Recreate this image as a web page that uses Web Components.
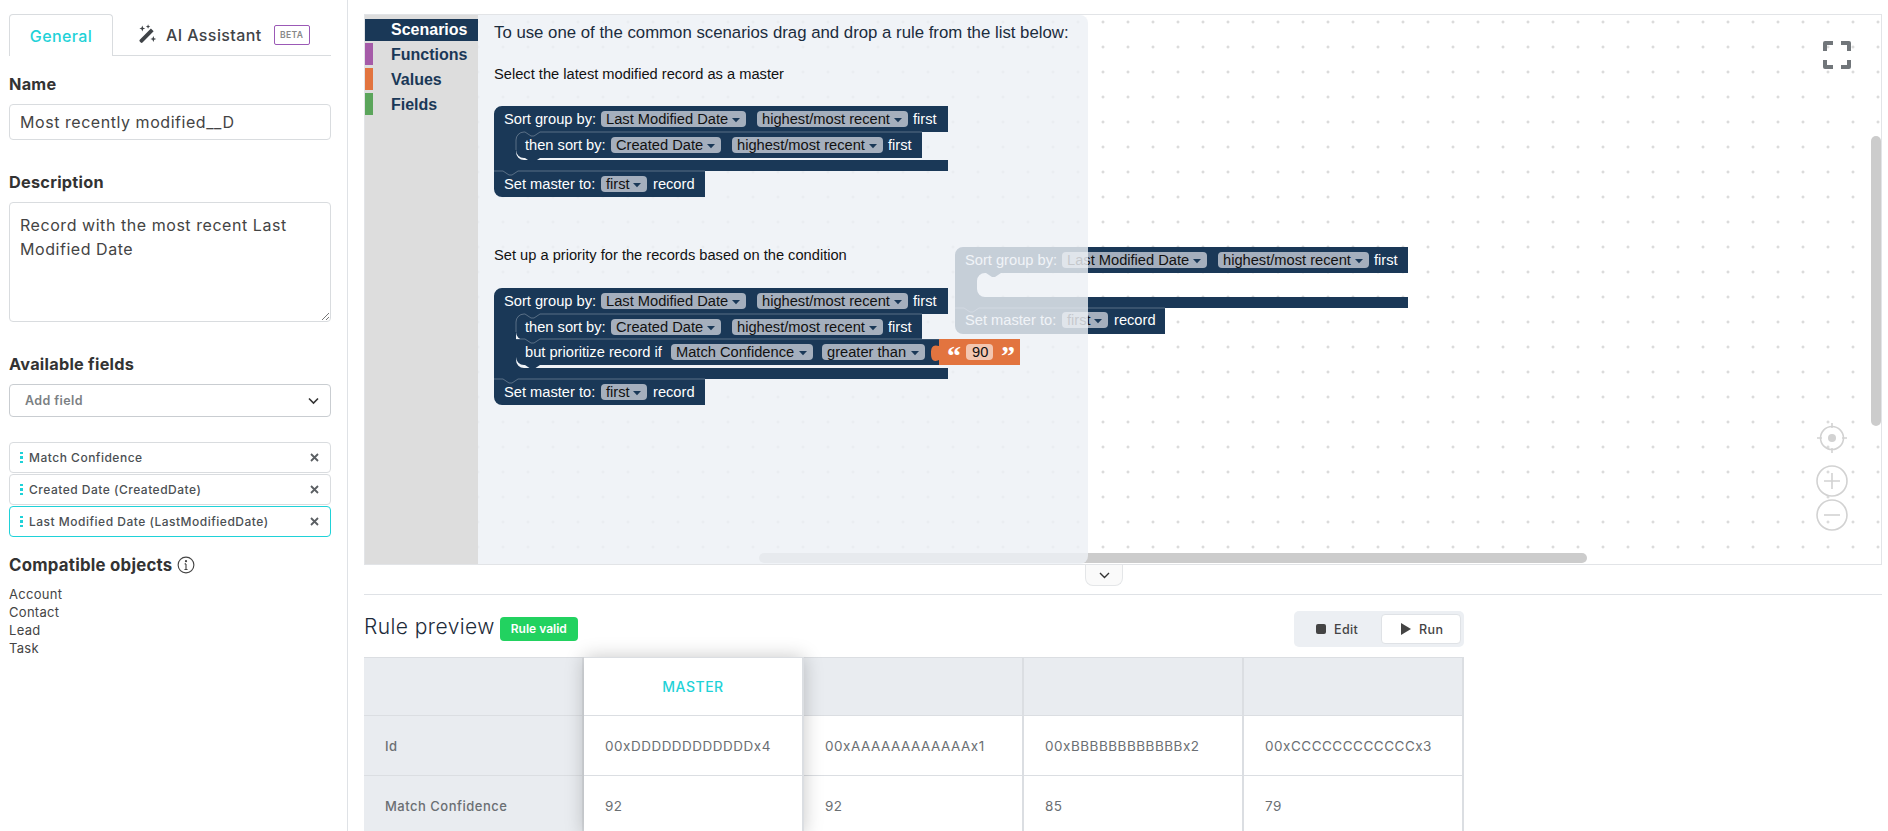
<!DOCTYPE html>
<html>
<head>
<meta charset="utf-8">
<style>
  html, body { margin: 0; height: 831px; overflow: hidden; background: #fff; }
  body { font-family: Inter, "Open Sans", sans-serif; color: #333; }
</style>
</head>
<body>
<rule-app>
  <rule-sidebar slot="side">
    <side-tabs></side-tabs>
    <side-label style="margin-top:19px">Name</side-label>
    <text-box style="margin-top:11px;height:36px">Most recently modified__D</text-box>
    <side-label style="margin-top:33px">Description</side-label>
    <text-box multi style="margin-top:11px;height:120px">Record with the most recent Last<br>Modified Date</text-box>
    <side-label style="margin-top:33px">Available fields</side-label>
    <add-select style="margin-top:11px"></add-select>
    <field-chip style="margin-top:25px">Match Confidence</field-chip>
    <field-chip style="margin-top:1px">Created Date (CreatedDate)</field-chip>
    <field-chip active style="margin-top:1px">Last Modified Date (LastModifiedDate)</field-chip>
    <side-label info style="margin-top:19px">Compatible objects</side-label>
    <object-list style="margin-top:11px">
      <div>Account</div><div>Contact</div><div>Lead</div><div>Task</div>
    </object-list>
  </rule-sidebar>
  <rule-canvas slot="main"></rule-canvas>
  <collapse-handle slot="main"></collapse-handle>
  <rule-preview slot="main"></rule-preview>
</rule-app>

<script>
  // small helper, every element is only markup + styles
  function simple(name, html) {
    customElements.define(name, class extends HTMLElement {
      constructor() {
        super();
        this.attachShadow({ mode: 'open' }).innerHTML = html;
      }
    });
  }

  simple('rule-app', `
    <style>
      :host { display: grid; grid-template-columns: 348px 1fr; height: 831px; overflow: hidden; }
      .side { border-right: 1px solid #dfe2e6; padding: 14px 16px 0 9px; }
      .main { position: relative; padding: 14px 6px 0 16px; min-width: 0; }
    </style>
    <div class="side"><slot name="side"></slot></div>
    <div class="main"><slot name="main"></slot></div>
  `);

  simple('rule-sidebar', `
    <style>:host { display: flex; flex-direction: column; }</style>
    <slot></slot>
  `);

  simple('side-tabs', `
    <style>
      :host { display: flex; height: 42px; border-bottom: 1px solid #d9dcdf; font-size: 16px; letter-spacing: .4px; font-weight: 500; box-sizing: border-box; }
      .on { width: 104px; box-sizing: border-box; margin-bottom: -1px; height: 42px; background: #fff; border: 1px solid #d9dcdf; border-bottom: 0; border-radius: 4px 4px 0 0; color: #1fd2d8; display: flex; align-items: center; justify-content: center; }
      .ai { display: flex; align-items: center; color: #3f4347; padding-left: 23px; }
      svg { width: 21px; height: 21px; margin-right: 9px; }
      .beta { margin-left: 12px; width: 36px; height: 20px; box-sizing: border-box; border: 1px solid #9b59b6; border-radius: 2px; color: #888; font-size: 8.5px; letter-spacing: .4px; font-weight: 600; display: flex; align-items: center; justify-content: center; }
    </style>
    <div class="on">General</div>
    <div class="ai">
      <svg viewBox="0 0 20 20" fill="#3f4347">
        <path d="M14.2 4.4l2.6 2.6L6.2 17.6a1.2 1.2 0 0 1-1.7 0l-.9-.9a1.2 1.2 0 0 1 0-1.7z"/>
        <path d="M6 1.5l.8 2 2 .8-2 .8-.8 2-.8-2-2-.8 2-.8zM11.5.3l.6 1.5 1.5.6-1.5.6-.6 1.5-.6-1.5-1.5-.6 1.5-.6zM16.5 11.5l.8 2 2 .8-2 .8-.8 2-.8-2-2-.8 2-.8z"/>
      </svg>
      AI Assistant
      <span class="beta">BETA</span>
    </div>
  `);

  simple('side-label', `
    <style>
      :host { display: flex; align-items: center; font-size: 16.3px; line-height: 18px; font-weight: 700; color: #333; letter-spacing: .25px; }
      svg { display: none; width: 18px; height: 18px; margin-left: 4px; }
      :host([info]) svg { display: block; }
      :host([info]) { font-size: 16.8px; }
    </style>
    <slot></slot>
    <svg viewBox="0 0 16 16" fill="none" stroke="#444"><circle cx="8" cy="8" r="7"/><path d="M8 7v5M6.6 12h2.8M6.8 7H8"/><circle cx="8" cy="4.6" r=".5"/></svg>
  `);

  simple('text-box', `
    <style>
      :host { display: block; position: relative; box-sizing: border-box; border: 1px solid #d9dcdf; border-radius: 4px; font-size: 16px; letter-spacing: .55px; color: #444; padding: 0 10px; line-height: 34px; white-space: nowrap; }
      :host([multi]) { line-height: 24px; padding: 10px 10px; }
      svg { display: none; position: absolute; right: 0; bottom: 0; width: 9px; height: 9px; }
      :host([multi]) svg { display: block; }
    </style>
    <slot></slot>
    <svg viewBox="0 0 9 9" stroke="#777" fill="none"><path d="M1 8l7-7M5 8l3-3"/></svg>
  `);

  simple('add-select', `
    <style>
      :host { display: flex; align-items: center; justify-content: space-between; height: 33px; box-sizing: border-box; border: 1px solid #c9cdd1; border-radius: 4px; padding: 0 11px 0 15px; font-size: 12.5px; font-weight: 600; letter-spacing: .4px; color: #7b7f83; }
      svg { width: 11px; height: 8px; }
    </style>
    Add field
    <svg viewBox="0 0 11 8" fill="none" stroke="#333" stroke-width="1.6"><path d="M1 1.5l4.5 4.5L10 1.5"/></svg>
  `);

  simple('field-chip', `
    <style>
      :host { display: flex; align-items: center; height: 31px; box-sizing: border-box; border: 1px solid #d9dcdf; border-radius: 4px; padding: 0 10px 0 10px; font-size: 12px; font-weight: 500; letter-spacing: .5px; color: #4b4f53; }
      :host([active]) { border-color: #1fd2d8; }
      .grip { width: 3px; margin: 0 6px 0 0; display: grid; gap: 2px; }
      .grip i { width: 3px; height: 2.5px; background: #1fd2d8; display: block; }
      .txt { flex: 1; white-space: nowrap; }
      svg { width: 9px; height: 9px; margin-right: 1px; }
    </style>
    <span class="grip"><i></i><i></i><i></i></span>
    <span class="txt"><slot></slot></span>
    <svg viewBox="0 0 9 9" stroke="#5b5f63" stroke-width="1.8" fill="none"><path d="M1 1l7 7M8 1l-7 7"/></svg>
  `);

  simple('object-list', `
    <style>:host { display: block; font-size: 13px; line-height: 18px; letter-spacing: .3px; color: #444; }</style>
    <slot></slot>
  `);

  // ---- blockly style workspace ----
  const NAVY = '#1a3857';
  const HI = 'rgba(255,255,255,.28)';

  function label(x, y, str) {
    return `<text x="${x}" y="${y}" class="w">${str}</text>`;
  }
  function pill(x, y, w, str) {
    const ax = x + w - 14;
    return `<rect x="${x}" y="${y}" width="${w}" height="16" rx="4" fill="#a5afbd"/>` +
      `<text x="${x + 5}" y="${y + 13}" class="d">${str}</text>` +
      `<path d="M${ax} ${y + 7}h8l-4 4.2z" fill="${NAVY}"/>`;
  }
  const notchR = 'l6 4 3 0 6 -4';
  const notchL = 'l-6 4 -3 0 -6 -4';

  // outer "Sort group by" statement block, inner rows are drawn on top of it
  function sortBlock(x, y, r, innerH, masterR) {
    const ix = x + 22;
    const top = y + 26, bar = top + innerH;
    const m = bar + 11;
    return `<path fill="${NAVY}" d="M${x + 8} ${y}H${r}V${top}H${ix + 24}${notchL}H${ix + 8}a8 8 0 0 0 -8 8V${bar - 8}a8 8 0 0 0 8 8H${r}V${m}H${x}V${y + 8}a8 8 0 0 1 8 -8z"/>` +
      `<path fill="${NAVY}" d="M${x} ${m}H${masterR}V${m + 26}H${x + 8}a8 8 0 0 1 -8 -8z"/>` +
      `<path fill="none" stroke="${HI}" d="M${x} ${m}H${x + 9}${notchR}H${masterR}"/>`;
  }
  function sortRow(y) {
    return label(504, y + 18, 'Sort group by:') + pill(601, y + 5, 145, 'Last Modified Date') +
      pill(757, y + 5, 151, 'highest/most recent') + label(913, y + 18, 'first');
  }
  function masterRow(y) {
    return label(504, y + 18, 'Set master to:') + pill(601, y + 5, 46, 'first') + label(653, y + 18, 'record');
  }
  function thenRow(y) {
    return `<path fill="${NAVY}" stroke="none" d="M516 ${y}H922V${y + 26}H540${notchL}H524a8 8 0 0 1 -8 -8z"/>` +
      `<path fill="none" stroke="${HI}" d="M516 ${y + 18}V${y + 8}a8 8 0 0 1 8 -8h1${notchR}H922"/>` +
      label(525, y + 18, 'then sort by:') + pill(611, y + 5, 110, 'Created Date') +
      pill(732, y + 5, 151, 'highest/most recent') + label(888, y + 18, 'first');
  }
  function butRow(y) {
    return `<path fill="${NAVY}" d="M516 ${y}H939V${y + 26}H540${notchL}H524a8 8 0 0 1 -8 -8z"/>` +
      `<path fill="none" stroke="${HI}" d="M516 ${y}H525${notchR}H939"/>` +
      label(525, y + 18, 'but prioritize record if') + pill(671, y + 5, 142, 'Match Confidence') +
      pill(822, y + 5, 103, 'greater than') +
      `<path fill="#e2743f" d="M939 ${y}H1020V${y + 26}H939V${y + 21}c-7 3 -8 -2 -8 -7c0 -6 2 -9 8 -7z"/>` +
      `<text x="947" y="${y + 26}" class="q">“</text><rect x="966" y="${y + 5}" width="27" height="16" rx="4" fill="#f3c6b0"/>` +
      `<text x="972" y="${y + 18}" class="d">90</text><text x="1001" y="${y + 26}" class="q">”</text>`;
  }

  function ghost() {
    const dx = 461;
    const y = 247;
    return sortBlock(955, y, 1408, 24, 1165) +
      label(504 + dx, y + 18, 'Sort group by:') + pill(601 + dx, y + 5, 145, 'Last Modified Date') +
      pill(757 + dx, y + 5, 151, 'highest/most recent') + label(913 + dx, y + 18, 'first') +
      label(504 + dx, 325, 'Set master to:') + pill(601 + dx, 312, 46, 'first') + label(653 + dx, 325, 'record');
  }

  simple('rule-canvas', `
    <style>
      :host { display: block; height: 551px; box-sizing: border-box; border: 1px solid #e2e4e7; }
      svg { display: block; width: 100%; height: 100%; font-family: "Liberation Sans", Arial, sans-serif; }
      .w { fill: #fff; font-size: 14.67px; }
      .d { fill: #111; font-size: 14.67px; }
      .q { fill: #fff; font-size: 28px; font-weight: 700; font-family: "Liberation Serif", serif; }
      .tb { font-size: 16px; font-weight: 700; fill: ${NAVY}; }
    </style>
    <svg viewBox="365 15 1516 549">
      <defs>
        <pattern id="grid" x="1091" y="10" width="25" height="25" patternUnits="userSpaceOnUse">
          <path d="M12 10.5v3M10.5 12h3" stroke="#cfcfcf" stroke-width="1"/>
        </pattern>
      </defs>
      <rect x="365" y="15" width="1516" height="549" fill="#fff"/>
      <rect x="365" y="15" width="1516" height="549" fill="url(#grid)"/>
      ${ghost()}
      <rect x="759" y="553" width="828" height="10" rx="5" fill="#ccc"/>
      <rect x="1871" y="136" width="10" height="290" rx="5" fill="#ccc"/>
      <path d="M478 15H1080a8 8 0 0 1 8 8V556a8 8 0 0 1 -8 8H478z" fill="#edf0f5" opacity=".82"/>

      <rect x="365" y="15" width="113" height="549" fill="#dddddd"/>
      <rect x="365" y="19" width="113" height="22" fill="${NAVY}"/>
      <rect x="365" y="43" width="8" height="22" fill="#a55ba8"/>
      <rect x="365" y="68" width="8" height="22" fill="#e2743f"/>
      <rect x="365" y="93" width="8" height="22" fill="#5ba55b"/>
      <text x="391" y="35" class="tb" style="fill:#fff">Scenarios</text>
      <text x="391" y="60" class="tb">Functions</text>
      <text x="391" y="85" class="tb">Values</text>
      <text x="391" y="110" class="tb">Fields</text>

      <text x="494" y="38" font-size="16.8" fill="#1b2c3d">To use one of the common scenarios drag and drop a rule from the list below:</text>
      <text x="494" y="79" font-size="14.67" fill="#111">Select the latest modified record as a master</text>
      ${sortBlock(494, 106, 948, 28, 705)}${sortRow(106)}${thenRow(132)}${masterRow(171)}
      <text x="494" y="260" font-size="14.67" fill="#111">Set up a priority for the records based on the condition</text>
      ${sortBlock(494, 288, 948, 54, 705)}${sortRow(288)}${thenRow(314)}${butRow(339)}${masterRow(379)}

      <g fill="none" stroke="#71767a" stroke-width="4" stroke-linejoin="round">
        <path d="M1825 51v-8h8M1841 43h8v8M1849 60v7h-8M1833 67h-8v-7"/>
      </g>
      <g fill="none" stroke="#d2d2d2" stroke-width="1.6">
        <circle cx="1832" cy="438" r="11.5"/>
        <path d="M1832 423v5M1832 448v5M1817 438h5M1842 438h5"/>
        <circle cx="1832" cy="481" r="15"/>
        <path d="M1824 481h16M1832 473v16"/>
        <circle cx="1832" cy="515" r="15"/>
        <path d="M1824 515h16"/>
      </g>
      <circle cx="1832" cy="438" r="4" fill="#d2d2d2"/>
    </svg>
  `);

  simple('collapse-handle', `
    <style>
      :host { position: absolute; left: 737px; top: 565px; width: 38px; height: 21px; box-sizing: border-box; background: #fafafa; border: 1px solid #e4e6e8; border-top: 0; border-radius: 0 0 8px 8px; display: flex; align-items: center; justify-content: center; }
      svg { width: 11px; height: 7px; }
    </style>
    <svg viewBox="0 0 11 7" fill="none" stroke="#333" stroke-width="1.4"><path d="M1 1l4.5 4.5L10 1"/></svg>
  `);

  simple('rule-preview', `
    <style>
      :host { display: block; margin-top: 29px; border-top: 1px solid #dfe2e6; padding-top: 16px; }
      .head { width: 1100px; height: 36px; display: flex; align-items: center; justify-content: space-between; }
      .left { display: flex; align-items: center; }
      h2 { margin: -5px 0 0; font-size: 21px; font-weight: 300; letter-spacing: .42px; color: #1d2b3a; }
      .ok { margin-left: 5px; width: 78px; height: 24px; margin-top: -1px; border-radius: 4px; background: #22d260; color: #fff; font-size: 12px; font-weight: 600; display: flex; align-items: center; justify-content: center; }
      .seg { width: 170px; height: 36px; box-sizing: border-box; background: #eceff3; border-radius: 5px; padding: 3px; display: flex; font-size: 12.5px; font-weight: 500; letter-spacing: .4px; color: #444; }
      .seg div { flex: 1; display: flex; align-items: center; gap: 8px; padding-left: 19px; }
      .seg .run { flex: none; width: 80px; box-sizing: border-box; background: #fff; border: 1px solid #dfe2e6; border-radius: 4px; }
      .sq { width: 10px; height: 10px; border-radius: 2px; background: #444; }
      .run svg { width: 10px; height: 12px; }
      .table { margin-top: 10px; width: 1100px; box-sizing: border-box; display: grid; grid-template-columns: repeat(5, 220px); grid-template-rows: 58px 60px 60px; position: relative; box-shadow: inset 0 0 0 1px #d9dcdf; font-size: 13.5px; letter-spacing: .5px; color: #6b6f73; }
      .c { box-sizing: border-box; border-right: 2px solid #dbdee2; border-top: 1px solid #dbdee2; display: flex; align-items: center; padding-left: 21px; white-space: nowrap; }
      .g { background: #e9ecf0; }
      .k { font-weight: 500; font-size: 13px; }
      .m { background: #fff; justify-content: center; padding: 0; color: #1fd2d8; font-size: 14px; font-weight: 500; }
      .shadow { position: absolute; left: 220px; width: 220px; top: 0; bottom: 0; box-shadow: 0 0 18px rgba(0,0,0,.22); pointer-events: none; }
    </style>
    <div class="head">
      <div class="left"><h2>Rule preview</h2><span class="ok">Rule valid</span></div>
      <div class="seg">
        <div><span class="sq"></span>Edit</div>
        <div class="run"><svg viewBox="0 0 10 12" fill="#444"><path d="M0 0l10 6-10 6z"/></svg>Run</div>
      </div>
    </div>
    <div class="table">
      <div class="c g"></div><div class="c m">MASTER</div><div class="c g"></div><div class="c g"></div><div class="c g"></div>
      <div class="c g k">Id</div><div class="c">00xDDDDDDDDDDDDx4</div><div class="c">00xAAAAAAAAAAAAx1</div><div class="c">00xBBBBBBBBBBBBx2</div><div class="c">00xCCCCCCCCCCCCx3</div>
      <div class="c g k">Match Confidence</div><div class="c">92</div><div class="c">92</div><div class="c">85</div><div class="c">79</div>
      <div class="shadow"></div>
    </div>
  `);
</script>
</body>
</html>
